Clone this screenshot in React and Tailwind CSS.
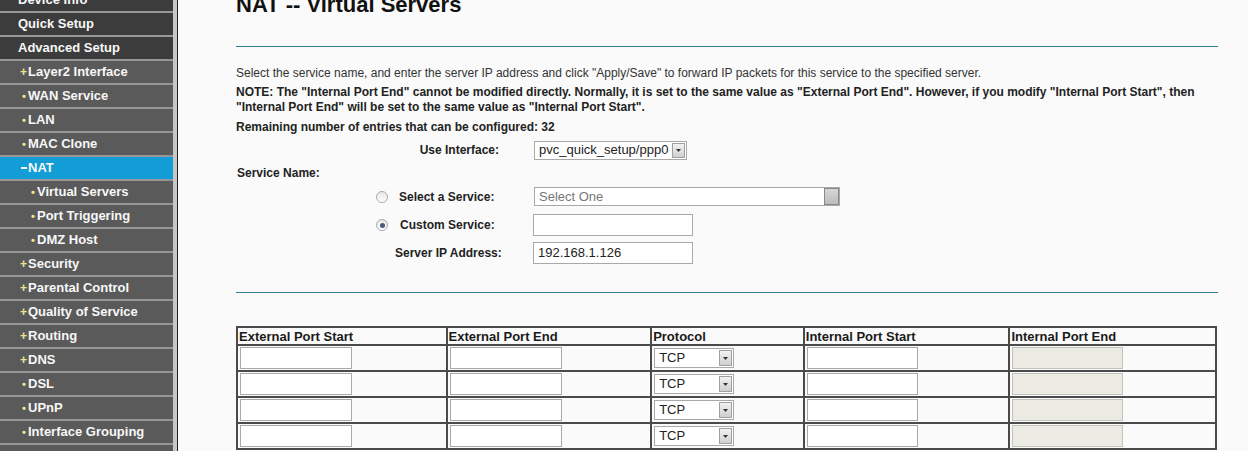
const menu = [
  { label: "Device Info", lvl: 0 },
  { label: "Quick Setup", lvl: 0 },
  { label: "Advanced Setup", lvl: 0 },
  { label: "Layer2 Interface", lvl: 1, mark: "+" },
  { label: "WAN Service", lvl: 1, mark: "•" },
  { label: "LAN", lvl: 1, mark: "•" },
  { label: "MAC Clone", lvl: 1, mark: "•" },
  { label: "NAT", lvl: 1, mark: "-", active: true },
  { label: "Virtual Servers", lvl: 2, mark: "•" },
  { label: "Port Triggering", lvl: 2, mark: "•" },
  { label: "DMZ Host", lvl: 2, mark: "•" },
  { label: "Security", lvl: 1, mark: "+" },
  { label: "Parental Control", lvl: 1, mark: "+" },
  { label: "Quality of Service", lvl: 1, mark: "+" },
  { label: "Routing", lvl: 1, mark: "+" },
  { label: "DNS", lvl: 1, mark: "+" },
  { label: "DSL", lvl: 1, mark: "•" },
  { label: "UPnP", lvl: 1, mark: "•" },
  { label: "Interface Grouping", lvl: 1, mark: "•" },
  { label: "LAN Ports", lvl: 1, mark: "•" },
];

const Marker = ({ mark }) => {
  if (mark === "+")
    return <span className="w-[8px] text-[#f3e58c] text-[12px] leading-none font-bold">+</span>;
  if (mark === "-")
    return <span className="w-[6px] h-[2px] bg-[#f4f4f4] ml-px mr-[1px]" />;
  return <span className="w-[8px] text-[#f3e58c] text-[11px] leading-none pl-[2px]">•</span>;
};

const Sidebar = () => (
  <div className="w-[173px] shrink-0 bg-[#5a5a5a] overflow-hidden">
    <div className="-mt-[11px]">
      {menu.map((m) => {
        const bg = m.active ? "bg-[#129dd6]" : m.lvl === 0 ? "bg-[#3c3c3c]" : "bg-[#5a5a5a]";
        const pad = m.lvl === 0 ? "pl-[18px]" : m.lvl === 1 ? "pl-[20px]" : "pl-[29px]";
        return (
          <div
            key={m.label}
            className={`h-[24px] border-b-2 border-[#979797] flex items-center ${bg} ${pad} text-[13px] font-bold text-[#f7f7f7]`}
          >
            {m.mark && <Marker mark={m.mark} />}
            <span>{m.label}</span>
          </div>
        );
      })}
    </div>
  </div>
);

const Arrow = ({ h = "h-[16px]" }) => (
  <span className={`w-[13px] ${h} border border-[#a0a0a0] bg-gradient-to-b from-[#f2f2f2] to-[#cfcfcf] flex items-center justify-center`}>
    <svg width="5" height="3" viewBox="0 0 5 3">
      <path d="M0 0h5L2.5 3z" fill="#333" />
    </svg>
  </span>
);

const Radio = ({ checked }) => (
  <span className="w-[12px] h-[12px] rounded-full border border-[#a9a9b0] bg-gradient-to-b from-[#e6e6e6] to-[#ffffff] flex items-center justify-center">
    {checked && <span className="w-[5px] h-[5px] rounded-full bg-[#4b587a]" />}
  </span>
);

const TextBox = ({ w, value, disabled }) => (
  <div
    className={`${w} h-[22px] border ${disabled ? "border-[#c2c2bb] bg-[#ebebe4]" : "border-[#a9a9a9] bg-white"} px-[4px] flex items-center text-[13px] font-normal text-[#222]`}
  >
    {value}
  </div>
);

const cols = ["w-[210px]", "w-[205px]", "w-[153px]", "w-[206px]", "w-[207px]"];
const heads = ["External Port Start", "External Port End", "Protocol", "Internal Port Start", "Internal Port End"];

export default function App() {
  return (
    <div
      className="h-[451px] w-[1248px] overflow-hidden flex bg-[#fafafa]"
      style={{ fontFamily: '"Liberation Sans", Arial, sans-serif' }}
    >
      <Sidebar />
      <div className="w-[4px] shrink-0 bg-[#c6c6c6]" />
      <div className="w-px shrink-0 bg-[#222]" />
      <div className="flex-1 pl-[58px]">
        <div className="w-[982px]">
          <h1 className="-mt-[6px] h-[22px] leading-[22px] text-[22px] font-bold text-[#111]">NAT -- Virtual Servers</h1>
          <div className="mt-[30px] h-px bg-[#317d92]" />
          <p className="mt-[19px] text-[12px] leading-[15px] text-[#333]">
            Select the service name, and enter the server IP address and click "Apply/Save" to forward IP packets for this service to the specified server.
          </p>
          <p className="mt-[4px] text-[12px] leading-[15px] font-bold text-[#222]">
            NOTE: The "Internal Port End" cannot be modified directly. Normally, it is set to the same value as "External Port End". However, if you modify "Internal Port Start", then
            <br />
            "Internal Port End" will be set to the same value as "Internal Port Start".
          </p>
          <p className="mt-[5px] text-[12px] leading-[15px] font-bold text-[#222]">
            Remaining number of entries that can be configured: 32
          </p>

          <div className="mt-[5px] h-[20px] flex items-center text-[12px] font-bold text-[#222]">
            <span className="w-[263px] text-right">Use Interface:</span>
            <div className="ml-[35px] w-[153px] h-[19px] border border-[#a9a9a9] bg-white flex items-center justify-between pl-[4px] pr-[1px] font-normal text-[13px]">
              <span>pvc_quick_setup/ppp0</span>
              <Arrow h="h-[15px]" />
            </div>
          </div>

          <p className="mt-[6px] text-[12px] leading-[15px] font-bold text-[#222] pl-px">Service Name:</p>

          <div className="mt-[6px] h-[19px] flex items-center text-[12px] font-bold text-[#222]">
            <span className="ml-[140px]"><Radio /></span>
            <span className="ml-[11px] w-[135px]">Select a Service:</span>
            <div className="w-[306px] h-[19px] border border-[#a9a9a9] bg-white flex items-center justify-between pl-[4px] font-normal text-[13px] text-[#777]">
              <span>Select One</span>
              <span className="w-[15px] h-[17px] border border-[#888] bg-gradient-to-b from-[#d6d6d6] to-[#bdbdbd]" />
            </div>
          </div>

          <div className="mt-[8px] h-[22px] flex items-center text-[12px] font-bold text-[#222]">
            <span className="ml-[140px]"><Radio checked /></span>
            <span className="ml-[12px] w-[132px]">Custom Service:</span>
            <span className="ml-px"><TextBox w="w-[160px]" /></span>
          </div>

          <div className="mt-[6px] h-[22px] flex items-center text-[12px] font-bold text-[#222]">
            <span className="ml-[159px] w-[137px]">Server IP Address:</span>
            <span className="ml-px"><TextBox w="w-[160px]" value="192.168.1.126" /></span>
          </div>

          <div className="mt-[28px] h-px bg-[#317d92]" />

          <table className="mt-[33px] border-collapse border-2 border-[#4a4a4a] w-[981px]">
            <thead>
              <tr>
                {heads.map((h, i) => (
                  <th
                    key={h}
                    className={`${cols[i]} h-[18px] border-2 border-[#4a4a4a] text-left font-bold text-[13px] leading-[14px] text-[#1a1a1a] px-px pt-px`}
                  >
                    {h}
                  </th>
                ))}
              </tr>
            </thead>
            <tbody>
              {[0, 1, 2, 3].map((r) => (
                <tr key={r}>
                  <td className="h-[26px] border-2 border-[#4a4a4a] px-[2px]"><TextBox w="w-[112px]" /></td>
                  <td className="h-[26px] border-2 border-[#4a4a4a] px-[2px]"><TextBox w="w-[112px]" /></td>
                  <td className="h-[26px] border-2 border-[#4a4a4a] px-[2px]">
                    <div className="w-[80px] h-[20px] border border-[#a9a9a9] bg-white flex items-center justify-between pl-[4px] pr-[1px] text-[13px] text-[#222]">
                      <span>TCP</span>
                      <Arrow h="h-[16px]" />
                    </div>
                  </td>
                  <td className="h-[26px] border-2 border-[#4a4a4a] px-[2px]"><TextBox w="w-[111px]" /></td>
                  <td className="h-[26px] border-2 border-[#4a4a4a] px-[2px]"><TextBox w="w-[111px]" disabled /></td>
                </tr>
              ))}
            </tbody>
          </table>
        </div>
      </div>
    </div>
  );
}
